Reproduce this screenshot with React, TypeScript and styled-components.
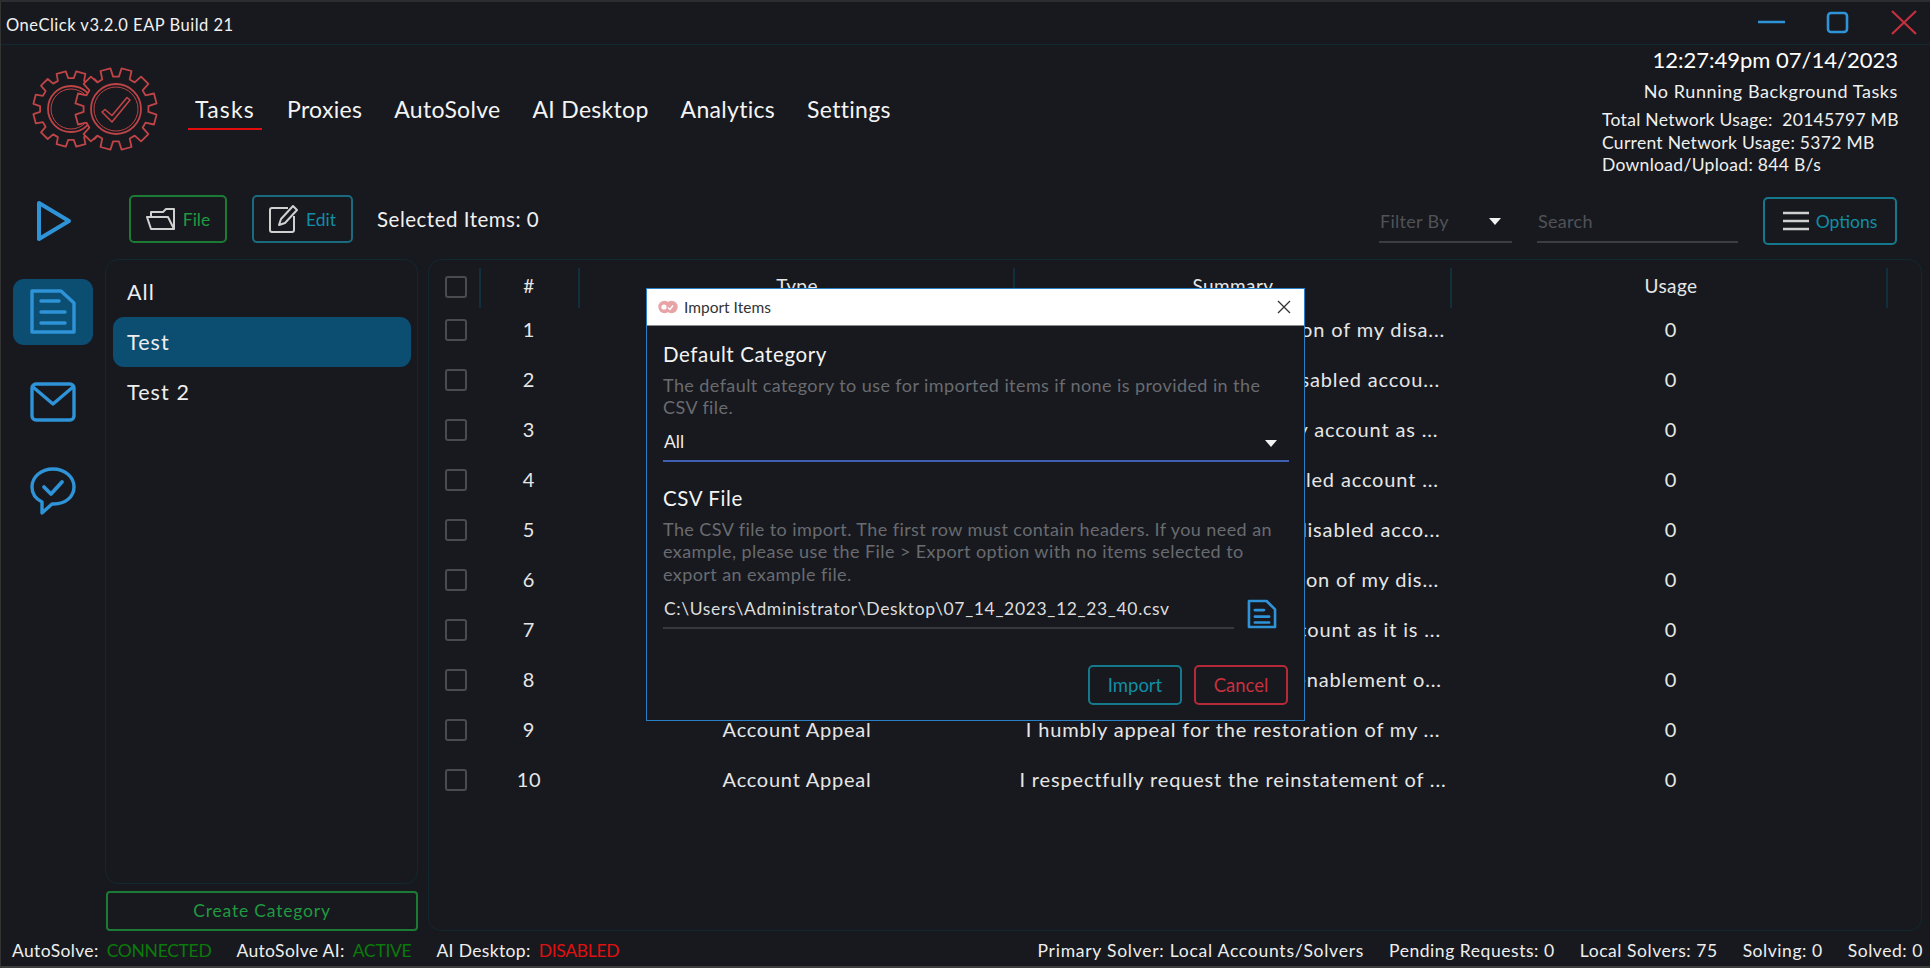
import React from 'react';
import styled, { createGlobalStyle } from 'styled-components';

const BG = '#17191e';
const BLUE = '#2f93d8';
const LINE = '#12282f';
const FONT = `"Lato", "Noto Sans", sans-serif`;

const Global = createGlobalStyle`
  html, body { margin: 0; padding: 0; background: ${BG}; }
  * { box-sizing: border-box; }
  #root { width: 1930px; height: 968px; overflow: hidden; }
`;

const Window = styled.div`
  position: relative;
  width: 1930px;
  height: 968px;
  background: ${BG};
  color: #f0f0f0;
  font-family: ${FONT};
  border-top: 2px solid #2c2d31;
  border-left: 1px solid #333;
  border-bottom: 2px solid #3d3d3d;
  overflow: hidden;
`;

const TitleBar = styled.div`
  position: absolute;
  left: 0;
  top: 0;
  width: 100%;
  height: 43px;
  border-bottom: 1px solid ${LINE};
  display: flex;
  align-items: center;
  padding: 4px 0 0 5px;
  font-size: 16.5px;
  letter-spacing: 0.5px;
  color: #f2f2f2;
`;

const WinIcon = styled.svg`
  position: absolute;
  left: ${p => p.$x}px;
  top: ${p => p.$y}px;
`;

const Logo = styled.svg`
  position: absolute;
  left: 20px;
  top: 50px;
`;

const Nav = styled.nav`
  position: absolute;
  left: 187px;
  top: 88px;
  display: flex;
  gap: 18px;
`;

const NavItem = styled.div`
  height: 40px;
  padding: 0 7px;
  font-size: 23px;
  letter-spacing: ${p => (p.$active ? '1.2px' : '0.3px')};
  line-height: 38px;
  color: #f4f4f4;
  border-bottom: 2px solid ${p => (p.$active ? '#e30d0d' : 'transparent')};
`;

const Stats = styled.div`
  position: absolute;
  right: 32px;
  top: 44px;
  width: 320px;
  text-align: right;
`;

const Clock = styled.div`
  font-size: 22px;
  line-height: 28px;
  color: #fff;
`;

const Background = styled.div`
  margin-top: 6px;
  font-size: 18px;
  letter-spacing: 0.6px;
  line-height: 22px;
`;

const NetLines = styled.div`
  margin-top: 7px;
  margin-left: 24px;
  text-align: left;
  font-size: 17.5px;
  letter-spacing: 0.3px;
  line-height: 22.5px;
  white-space: pre;
`;

const ToolButton = styled.div`
  position: absolute;
  left: ${p => p.$x}px;
  top: ${p => p.$y}px;
  width: ${p => p.$w}px;
  height: 48px;
  display: flex;
  align-items: center;
  justify-content: center;
  gap: 7px;
  border: 2px solid ${p => p.$border};
  border-radius: 5px;
  color: ${p => p.$color};
  font-size: 17.5px;
`;

const SelectedCount = styled.div`
  position: absolute;
  left: 376px;
  top: 204px;
  font-size: 20.5px;
  letter-spacing: 0.5px;
  line-height: 26px;
`;

const Field = styled.div`
  position: absolute;
  left: ${p => p.$x}px;
  top: 207px;
  width: ${p => p.$w}px;
  height: 34px;
  border-bottom: 2px solid #3c3d40;
  padding-left: 1px;
  font-size: 18px;
  letter-spacing: 0.3px;
  line-height: 25px;
  color: #505257;
`;

const Caret = styled.div`
  position: absolute;
  width: 0;
  height: 0;
  border-left: 6px solid transparent;
  border-right: 6px solid transparent;
  border-top: 7px solid #f2f2f2;
  right: ${p => p.$r}px;
  top: ${p => p.$t}px;
`;

const RailSlot = styled.div`
  position: absolute;
  left: 12px;
  top: ${p => p.$y}px;
  width: 80px;
  height: 66px;
  display: flex;
  align-items: center;
  justify-content: center;
  border-radius: 11px;
  background: ${p => (p.$active ? '#0b4e72' : 'transparent')};
`;

const Panel = styled.div`
  position: absolute;
  left: ${p => p.$x}px;
  top: 257px;
  width: ${p => p.$w}px;
  height: ${p => p.$h}px;
  border: 1px solid ${LINE};
  border-radius: 13px;
`;

const CategoryList = styled.div`
  padding: 7px 6px 0 7px;
`;

const Category = styled.div`
  height: 50px;
  padding-left: 14px;
  border-radius: 11px;
  font-size: 21.5px;
  letter-spacing: 1.1px;
  line-height: 50px;
  color: #eee;
  background: ${p => (p.$active ? '#0b4e72' : 'transparent')};
`;

const CreateButton = styled.div`
  position: absolute;
  left: 105px;
  top: 889px;
  width: 312px;
  height: 40px;
  border: 2px solid #1d7a34;
  border-radius: 4px;
  text-align: center;
  font-size: 17.5px;
  letter-spacing: 0.8px;
  line-height: 36px;
  color: #1f9a40;
`;

const Row = styled.div`
  position: absolute;
  left: 0;
  top: ${p => p.$y}px;
  width: 100%;
  height: 50px;
  font-size: 20px;
  letter-spacing: 0.75px;
  color: #e6e6e6;
`;

const Check = styled.div`
  position: absolute;
  left: 16px;
  top: 14px;
  width: 22px;
  height: 22px;
  border: 2px solid #4a4b4e;
  border-radius: 3px;
`;

const Cell = styled.div`
  position: absolute;
  top: 0;
  left: ${p => p.$c - 300}px;
  width: 600px;
  text-align: center;
  line-height: 48px;
  white-space: nowrap;
`;

const SummaryCell = styled(Cell)`
  letter-spacing: 0.85px;
`;

const HeaderCell = styled(Cell)`
  font-size: 19px;
  letter-spacing: 0.4px;
`;

const Divider = styled.div`
  position: absolute;
  top: 6px;
  left: ${p => p.$x}px;
  width: 2px;
  height: 40px;
  background: #11303c;
`;

const StatusBar = styled.div`
  position: absolute;
  left: 11px;
  right: 7px;
  top: 936px;
  height: 26px;
  display: flex;
  justify-content: space-between;
  font-size: 17.5px;
  line-height: 26px;
  color: #eee;
`;

const StatusGroup = styled.div`
  display: flex;
  gap: 25px;
  letter-spacing: ${p => p.$spacing}px;
`;

const StatusValue = styled.span`
  margin-left: 8px;
  letter-spacing: -0.3px;
  color: ${p => p.$color};
`;

const SolverName = styled.span`
  letter-spacing: 0.75px;
`;

const Modal = styled.div`
  position: absolute;
  left: 645px;
  top: 286px;
  width: 659px;
  height: 433px;
  background: ${BG};
  border: 1px solid #2a80c4;
`;

const ModalBar = styled.div`
  height: 37px;
  background: #fff;
  border-bottom: 1px solid #8a8a8a;
  display: flex;
  align-items: center;
  padding-left: 11px;
  color: #333;
  font-size: 15.5px;
`;

const ModalTitle = styled.span`
  margin-left: 6px;
`;

const ModalClose = styled.svg`
  position: absolute;
  right: 13px;
  top: 11px;
`;

const ModalBody = styled.div`
  padding: 0 15px 0 16px;
`;

const Heading = styled.div`
  margin-top: ${p => p.$top}px;
  font-size: 20.5px;
  letter-spacing: 0.6px;
  line-height: 26px;
  color: #f4f4f4;
`;

const Help = styled.div`
  margin-top: 7px;
  font-size: 18px;
  letter-spacing: 0.42px;
  line-height: 22.4px;
  color: #696b70;
`;

const SelectLine = styled.div`
  position: relative;
  height: 42px;
  margin-top: 1px;
  border-bottom: 2px solid #3e5fb2;
  padding-left: 1px;
  font-size: 17.5px;
  line-height: 44px;
  color: #eee;
`;

const PathRow = styled.div`
  position: relative;
  margin-top: 5px;
  width: 571px;
  height: 39px;
  border-bottom: 2px solid #37383b;
  padding-left: 1px;
  font-size: 17.5px;
  letter-spacing: 0.65px;
  line-height: 38px;
  color: #ddd;
  white-space: nowrap;
`;

const PathIcon = styled.svg`
  position: absolute;
  left: 584px;
  top: 9px;
`;

const ModalButton = styled.div`
  position: absolute;
  top: 376px;
  left: ${p => p.$x}px;
  width: 94px;
  height: 40px;
  border: 2px solid ${p => p.$border};
  border-radius: 5px;
  text-align: center;
  font-size: 18.5px;
  line-height: 36px;
  color: ${p => p.$color};
`;

// gear outline with n teeth, half a tooth off so two teeth straddle the top
const gearPath = (cx: number, cy: number, outer: number, root: number, n = 12) => {
  const pts: string[] = [];
  const step = (Math.PI * 2) / n;
  for (let i = 0; i < n; i++) {
    const a = -Math.PI / 2 + step / 2 + i * step;
    const at = (r: number, d: number) =>
      `${(cx + Math.cos(a + d * step) * r).toFixed(1)} ${(cy + Math.sin(a + d * step) * r).toFixed(1)}`;
    pts.push(at(root, -0.33), at(outer, -0.24), at(outer, 0.24), at(root, 0.33));
  }
  return `M${pts.join('L')}Z`;
};

const GearLogo = () => (
  <Logo width="140" height="100" viewBox="0 0 140 100" fill="none" stroke="#bf4447" strokeWidth="1.8" strokeLinejoin="round">
    <path d={gearPath(50, 57, 38, 31)} />
    <circle cx="50" cy="57" r="23" />
    <circle cx="50" cy="57" r="20" strokeWidth="1" />
    <path d={gearPath(95, 57, 41, 32.5)} fill={BG} />
    <circle cx="95" cy="57" r="25" />
    <circle cx="95" cy="57" r="22" strokeWidth="1" />
    <path d="M81 60l10 10 18-22-3-2.5-15 18-7-6z" strokeWidth="1.6" />
  </Logo>
);

const DocIcon = () => (
  <svg width="46" height="46" viewBox="0 0 46 46" fill="none" stroke={BLUE} strokeWidth="3.4" strokeLinejoin="round" strokeLinecap="round">
    <path d="M2 2h29l13 12v29H2z" />
    <path d="M11 12h18M11 23h24M11 34h24" />
  </svg>
);

const rows = [
  ['1', 'Account Appeal', 'I kindly request the reactivation of my disa...'],
  ['2', 'Account Appeal', 'Please help me restore my disabled accou...'],
  ['3', 'Account Appeal', 'I now ask you to reinstate my account as ...'],
  ['4', 'Account Appeal', "I'd like to reactivate my disabled account ..."],
  ['5', 'Account Appeal', 'I ask you, please restore my disabled acco...'],
  ['6', 'Account Appeal', 'I ask of you to allow restoration of my dis...'],
  ['7', 'Account Appeal', 'Please restore my flagged account as it is ...'],
  ['8', 'Account Appeal', 'I am firmly requesting the reenablement o...'],
  ['9', 'Account Appeal', 'I humbly appeal for the restoration of my ...'],
  ['10', 'Account Appeal', 'I respectfully request the reinstatement of ...'],
];

const App = () => (
  <Window>
    <Global />
    <TitleBar>OneClick v3.2.0 EAP Build 21</TitleBar>
    <WinIcon $x={1756} $y={18} width="30" height="4" viewBox="0 0 30 4"><path d="M1 2h27" stroke={BLUE} strokeWidth="2.5" /></WinIcon>
    <WinIcon $x={1825} $y={9} width="24" height="24" viewBox="0 0 24 24"><rect x="2" y="2" width="19" height="19" rx="3" fill="none" stroke={BLUE} strokeWidth="2.6" /></WinIcon>
    <WinIcon $x={1889} $y={7} width="28" height="27" viewBox="0 0 28 27"><path d="M2 2l24 23M26 2L2 25" stroke="#c5303f" strokeWidth="2.2" fill="none" /></WinIcon>

    <GearLogo />
    <Nav>
      <NavItem $active>Tasks</NavItem>
      <NavItem>Proxies</NavItem>
      <NavItem>AutoSolve</NavItem>
      <NavItem>AI Desktop</NavItem>
      <NavItem>Analytics</NavItem>
      <NavItem>Settings</NavItem>
    </Nav>

    <Stats>
      <Clock>12:27:49pm 07/14/2023</Clock>
      <Background>No Running Background Tasks</Background>
      <NetLines>
        {'Total Network Usage:  20145797 MB\nCurrent Network Usage: 5372 MB\nDownload/Upload: 844 B/s'}
      </NetLines>
    </Stats>

    <WinIcon $x={34} $y={198} width="38" height="42" viewBox="0 0 38 42"><path d="M4 3l30 18L4 39z" fill="none" stroke={BLUE} strokeWidth="4" strokeLinejoin="round" /></WinIcon>

    <ToolButton $x={128} $y={193} $w={98} $border="#1d7a34" $color="#1f9a40">
      <svg width="30" height="25" viewBox="0 0 30 25" fill="none" stroke="#d0d0d0" strokeWidth="2" strokeLinejoin="round">
        <path d="M5 10V5h12l3-3h8v20" />
        <path d="M1 10h21l6 12H5z" />
      </svg>
      File
    </ToolButton>
    <ToolButton $x={251} $y={193} $w={101} $border="#1a6a80" $color="#118ea6">
      <svg width="30" height="30" viewBox="0 0 30 30" fill="none" stroke="#d0d0d0" strokeWidth="2" strokeLinejoin="round">
        <path d="M19 4H3a2 2 0 0 0-2 2v20a2 2 0 0 0 2 2h20a2 2 0 0 0 2-2V12" />
        <path d="M10 21l2-6L24 2l4 4L16 19z" />
      </svg>
      Edit
    </ToolButton>
    <SelectedCount>Selected Items: 0</SelectedCount>

    <Field $x={1378} $w={133}>Filter By<Caret $r={11} $t={9} /></Field>
    <Field $x={1536} $w={201}>Search</Field>
    <ToolButton $x={1762} $y={195} $w={134} $border="#15788c" $color="#118ea6">
      <svg width="26" height="20" viewBox="0 0 26 20" stroke="#d0d0d0" strokeWidth="2.6"><path d="M0 2h26M0 10h26M0 18h26" /></svg>
      Options
    </ToolButton>

    <RailSlot $y={277} $active><DocIcon /></RailSlot>
    <RailSlot $y={367}>
      <svg width="46" height="40" viewBox="0 0 46 40" fill="none" stroke={BLUE} strokeWidth="3.4" strokeLinejoin="round"><rect x="2" y="2" width="42" height="36" rx="4" /><path d="M3 5l20 17L43 5" /></svg>
    </RailSlot>
    <RailSlot $y={456}>
      <svg width="46" height="48" viewBox="0 0 46 48" fill="none" stroke={BLUE} strokeWidth="3.4" strokeLinejoin="round" strokeLinecap="round"><path d="M23 2C11 2 2 10 2 20c0 7 4 12 10 15l0 11 10-9h2c11 0 20-7 20-17S35 2 23 2z" /><path d="M14 20l7 7 11-12" strokeWidth="3.8" /></svg>
    </RailSlot>

    <Panel $x={104} $w={313} $h={625}>
      <CategoryList>
        <Category>All</Category>
        <Category $active>Test</Category>
        <Category>Test 2</Category>
      </CategoryList>
    </Panel>
    <CreateButton>Create Category</CreateButton>

    <Panel $x={427} $w={1494} $h={672}>
      <Row $y={2}>
        <Check />
        <Divider $x={50} />
        <Divider $x={149} />
        <Divider $x={584} />
        <Divider $x={1021} />
        <Divider $x={1457} />
        <HeaderCell $c={100}>#</HeaderCell>
        <HeaderCell $c={368}>Type</HeaderCell>
        <HeaderCell $c={804}>Summary</HeaderCell>
        <HeaderCell $c={1242}>Usage</HeaderCell>
      </Row>
      {rows.map(([n, type, summary], i) => (
        <Row key={n} $y={45 + i * 50}>
          <Check />
          <Cell $c={100}>{n}</Cell>
          <Cell $c={368}>{type}</Cell>
          <SummaryCell $c={804}>{summary}</SummaryCell>
          <Cell $c={1242}>0</Cell>
        </Row>
      ))}
    </Panel>

    <StatusBar>
      <StatusGroup $spacing={0.35}>
        <span>AutoSolve:<StatusValue $color="#0b7a0b">CONNECTED</StatusValue></span>
        <span>AutoSolve AI:<StatusValue $color="#0b7a0b">ACTIVE</StatusValue></span>
        <span>AI Desktop:<StatusValue $color="#e01010">DISABLED</StatusValue></span>
      </StatusGroup>
      <StatusGroup $spacing={0.55}>
        <SolverName>Primary Solver: Local Accounts/Solvers</SolverName>
        <span>Pending Requests: 0</span>
        <span>Local Solvers: 75</span>
        <span>Solving: 0</span>
        <span>Solved: 0</span>
      </StatusGroup>
    </StatusBar>

    <Modal>
      <ModalBar>
        <svg width="20" height="14" viewBox="0 0 20 14" fill="#e7a3a5"><circle cx="6.5" cy="7" r="6.2" /><circle cx="13.5" cy="7" r="6.2" /><path d="M10 7.5l2 2 3-4" stroke="#fff" strokeWidth="1.3" fill="none" /><circle cx="6" cy="7" r="2.6" fill="#fff" /></svg>
        <ModalTitle>Import Items</ModalTitle>
        <ModalClose width="14" height="14" viewBox="0 0 14 14"><path d="M1 1l12 12M13 1L1 13" stroke="#333" strokeWidth="1.3" /></ModalClose>
      </ModalBar>
      <ModalBody>
        <Heading $top={15}>Default Category</Heading>
        <Help>The default category to use for imported items if none is provided in the CSV file.</Help>
        <SelectLine>All<Caret $r={12} $t={20} /></SelectLine>
        <Heading $top={23}>CSV File</Heading>
        <Help>The CSV file to import. The first row must contain headers. If you need an example, please use the File &gt; Export option with no items selected to export an example file.</Help>
        <PathRow>
          C:\Users\Administrator\Desktop\07_14_2023_12_23_40.csv
          <PathIcon width="30" height="30" viewBox="0 0 46 46" fill="none" stroke={BLUE} strokeWidth="4" strokeLinejoin="round" strokeLinecap="round"><path d="M3 3h27l13 13v27H3z" /><path d="M12 17h14M12 27h22M12 36h22" /></PathIcon>
        </PathRow>
      </ModalBody>
      <ModalButton $x={441} $border="#15788c" $color="#118ea6">Import</ModalButton>
      <ModalButton $x={547} $border="#b52a38" $color="#c8303f">Cancel</ModalButton>
    </Modal>
  </Window>
);

export default App;
